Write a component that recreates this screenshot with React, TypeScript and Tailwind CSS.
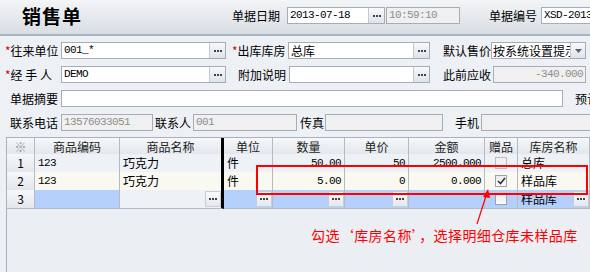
import React from "react";

const cjk = { fontFamily: '"Noto Sans CJK SC", "Noto Sans", sans-serif' };
const mono = { fontFamily: '"Liberation Mono", "Noto Sans CJK SC", monospace' };

function Dots() {
  return (
    <span className="flex h-full w-[16px] shrink-0 items-center justify-center gap-[1px] border-l border-[#c3c9d0] bg-gradient-to-b from-[#f8f9fb] to-[#dfe3e8]">
      <i className="h-[2px] w-[2px] bg-[#3b4652]" />
      <i className="h-[2px] w-[2px] bg-[#3b4652]" />
      <i className="h-[2px] w-[2px] bg-[#3b4652]" />
    </span>
  );
}

function Field({
  w,
  value,
  btn,
  disabled,
  right,
  num,
}: {
  w: string;
  value?: string;
  btn?: boolean;
  disabled?: boolean;
  right?: boolean;
  num?: boolean;
}) {
  return (
    <div
      className={`${w} flex h-[17px] shrink-0 items-stretch overflow-hidden border border-[#a6adb5] ${
        disabled ? "bg-[#f0f0f0] text-[#8e8e8e]" : "bg-white text-black"
      }`}
    >
      <span
        className={`flex flex-1 items-center overflow-hidden whitespace-nowrap px-[2px] ${
          right ? "justify-end" : ""
        } ${num ? "text-[11px] tracking-[-0.6px]" : "text-[12px]"}`}
        style={num ? mono : cjk}
      >
        {value}
      </span>
      {btn && <Dots />}
    </div>
  );
}

function Label({ text, w, star, ml }: { text: string; w: string; star?: boolean; ml?: string }) {
  return (
    <span className={`${w} ${ml ?? ""} shrink-0 whitespace-nowrap text-[12px] leading-[17px] text-black`}>
      {star && <span className="text-[#e00000]">*</span>}
      {text}
    </span>
  );
}

function Check({ checked, faded }: { checked?: boolean; faded?: boolean }) {
  return (
    <span
      className={`flex h-[12px] w-[12px] items-center justify-center border ${
        faded ? "border-[#b8bec5] bg-[#eef0f2]" : "border-[#9aa3ac] bg-gradient-to-b from-[#e9ecef] to-[#fbfbfc]"
      }`}
    >
      {checked && (
        <svg width="9" height="8" viewBox="0 0 9 8">
          <path d="M1 4 L3.5 6.5 L8 1" fill="none" stroke="#2c3440" strokeWidth="1.6" />
        </svg>
      )}
    </span>
  );
}

const cols = "grid-cols-[28px_85px_104px_49px_72px_64px_76px_33px_72px_40px]";

const headCell =
  "flex items-center justify-center border-r border-b border-[#b3bcc6] bg-gradient-to-b from-[#f6f8fa] to-[#e0e5ea] text-[12px] text-[#1e1e1e]";

function Cell({
  children,
  bg,
  right,
  btn,
  thick,
  center,
}: {
  children?: React.ReactNode;
  bg: string;
  right?: boolean;
  btn?: boolean;
  thick?: boolean;
  center?: boolean;
}) {
  return (
    <div
      className={`${bg} flex items-stretch overflow-hidden border-b border-[#b3bcc6] ${
        thick ? "border-r-[3px] border-r-black" : "border-r"
      }`}
    >
      <span
        className={`flex flex-1 items-center whitespace-nowrap px-[3px] ${right ? "justify-end" : ""} ${
          center ? "justify-center" : ""
        }`}
      >
        {children}
      </span>
      {btn && (
        <span className="my-[1px] flex w-[16px] shrink-0 items-center justify-center gap-[1px] border border-[#c8ced5] bg-gradient-to-b from-[#fafbfc] to-[#e4e8ec]">
          <i className="h-[2px] w-[2px] bg-[#3b4652]" />
          <i className="h-[2px] w-[2px] bg-[#3b4652]" />
          <i className="h-[2px] w-[2px] bg-[#3b4652]" />
        </span>
      )}
    </div>
  );
}

function Num({ v }: { v: string }) {
  return (
    <span className="text-[11px] tracking-[-0.6px]" style={mono}>
      {v}
    </span>
  );
}

export default function App() {
  const r1 = "bg-[#eef2f7]";
  const r2 = "bg-[#f9f9f2]";
  const sel = "bg-[#b3cffa]";
  const rowNo =
    "flex items-center justify-center border-r border-b border-[#b3bcc6] bg-gradient-to-b from-[#f6f8fa] to-[#e3e7ec] text-[12px]";

  return (
    <div className="relative h-[272px] w-[590px] overflow-hidden bg-[#edf0f4] text-[12px]" style={cjk}>
      {/* header band */}
      <div className="flex h-[36px] items-start border-b-2 border-[#a8b6c4] bg-gradient-to-b from-[#f3f5f7] to-[#d9dee4] pt-[7px]">
        <div className="w-[232px] shrink-0 pl-[22px] text-[19px] font-bold leading-[17px] tracking-[1px] text-black">
          销售单
        </div>
        <Label text="单据日期" w="w-[55px]" />
        <div className="flex h-[17px] w-[98px] shrink-0 items-stretch border border-[#a6adb5] bg-white">
          <span className="flex flex-1 items-center px-[2px] text-[11px] tracking-[-0.6px]" style={mono}>
            2013-07-18
          </span>
          <Dots />
        </div>
        <Field w="w-[74px] ml-[1px]" value="10:59:10" disabled num />
        <Label text="单据编号" w="w-[52px]" ml="ml-[29px]" />
        <Field w="w-[60px]" value="XSD-2013" num />
      </div>

      {/* form rows */}
      <div className="flex flex-col gap-[7px] pt-[6px]">
        <div className="flex items-center pl-[5px]">
          <Label text="往来单位" w="w-[56px]" star />
          <Field w="w-[165px]" value="001_*" btn num />
          <Label text="出库库房" w="w-[56px]" ml="ml-[6px]" star />
          <Field w="w-[142px]" value="总库" btn />
          <Label text="默认售价" w="w-[48px]" ml="ml-[13px]" />
          <div className="flex h-[17px] w-[95px] shrink-0 items-stretch border border-[#a6adb5] bg-white">
            <span className="flex-1 overflow-hidden whitespace-nowrap pl-[1px] text-[12px] leading-[15px]">
              按系统设置提示
            </span>
            <span className="flex w-[15px] shrink-0 items-center justify-center border-l border-[#c3c9d0] bg-gradient-to-b from-[#f8f9fb] to-[#dfe3e8]">
              <svg width="7" height="4" viewBox="0 0 7 4">
                <path d="M0 0 H7 L3.5 4 Z" fill="#5a636d" />
              </svg>
            </span>
          </div>
        </div>

        <div className="flex items-center pl-[5px]">
          <Label text="经 手 人" w="w-[56px]" star />
          <Field w="w-[165px]" value="DEMO" btn num />
          <Label text="附加说明" w="w-[51px]" ml="ml-[12px]" />
          <Field w="w-[141px]" btn />
          <Label text="此前应收" w="w-[50px]" ml="ml-[13px]" />
          <Field w="w-[93px]" value="-340.000" disabled right num />
        </div>

        <div className="flex items-center pl-[10px]">
          <Label text="单据摘要" w="w-[51px]" />
          <Field w="w-[502px]" />
          <Label text="预计" w="w-[40px]" ml="ml-[12px]" />
        </div>

        <div className="flex items-center pl-[10px]">
          <Label text="联系电话" w="w-[51px]" />
          <Field w="w-[92px]" value="13576033051" disabled num />
          <Label text="联系人" w="w-[38px]" ml="ml-[2px]" />
          <Field w="w-[104px]" value="001" disabled num />
          <Label text="传真" w="w-[25px]" ml="ml-[3px]" />
          <Field w="w-[118px]" disabled />
          <Label text="手机" w="w-[26px]" ml="ml-[12px]" />
          <Field w="w-[120px]" disabled />
        </div>
      </div>

      {/* grid */}
      <div className="ml-[6px] mt-[6px] h-[200px] border-l border-t border-[#a9b2bc] bg-[#ebeef2]">
        <div className={`grid ${cols} h-[16px]`}>
          <div className={`${headCell} text-[10px] text-[#8c939a]`}>※</div>
          <div className={headCell}>商品编码</div>
          <div className={`${headCell} border-r-[3px] border-r-black`}>商品名称</div>
          <div className={headCell}>单位</div>
          <div className={headCell}>数量</div>
          <div className={headCell}>单价</div>
          <div className={headCell}>金额</div>
          <div className={headCell}>赠品</div>
          <div className={headCell}>库房名称</div>
          <div className={headCell} />
        </div>

        <div className={`grid ${cols} h-[18px]`}>
          <div className={rowNo}>1</div>
          <Cell bg={r1}><Num v="123" /></Cell>
          <Cell bg={r1} thick>巧克力</Cell>
          <Cell bg={r1}>件</Cell>
          <Cell bg={r1} right><Num v="50.00" /></Cell>
          <Cell bg={r1} right><Num v="50" /></Cell>
          <Cell bg={r1} right><Num v="2500.000" /></Cell>
          <Cell bg={r1} center><Check faded /></Cell>
          <Cell bg={r1}>总库</Cell>
          <Cell bg={r1} />
        </div>

        <div className={`grid ${cols} h-[18px]`}>
          <div className={rowNo}>2</div>
          <Cell bg={r2}><Num v="123" /></Cell>
          <Cell bg={r2} thick>巧克力</Cell>
          <Cell bg={r2}>件</Cell>
          <Cell bg={r2} right><Num v="5.00" /></Cell>
          <Cell bg={r2} right><Num v="0" /></Cell>
          <Cell bg={r2} right><Num v="0.000" /></Cell>
          <Cell bg={r2} center><Check checked /></Cell>
          <Cell bg={r2}>样品库</Cell>
          <Cell bg={r2} />
        </div>

        <div className={`grid ${cols} h-[18px]`}>
          <div className={rowNo}>3</div>
          <Cell bg={sel} />
          <Cell bg={r1} thick btn />
          <Cell bg={sel} btn />
          <Cell bg={sel} btn />
          <Cell bg={sel} btn />
          <Cell bg={sel} />
          <Cell bg={sel} center><Check /></Cell>
          <Cell bg={sel} btn>样品库</Cell>
          <Cell bg={sel} />
        </div>
      </div>

      {/* annotation overlay */}
      <div className="absolute left-[256px] top-[165px] h-[30px] w-[332px] border-2 border-[#ff0000]" />
      <svg className="absolute left-0 top-0" width="590" height="272" viewBox="0 0 590 272">
        <line x1="477" y1="224" x2="486" y2="196" stroke="#ff0000" strokeWidth="1.2" />
        <path d="M488 189 L483 197 L490 198 Z" fill="#ff0000" />
      </svg>
      <div className="absolute left-[311px] top-[227px] whitespace-nowrap text-[14px] leading-[16px] tracking-[0.4px] text-[#ff0000]">
        勾选‘库房名称’，选择明细仓库未样品库
      </div>
    </div>
  );
}
